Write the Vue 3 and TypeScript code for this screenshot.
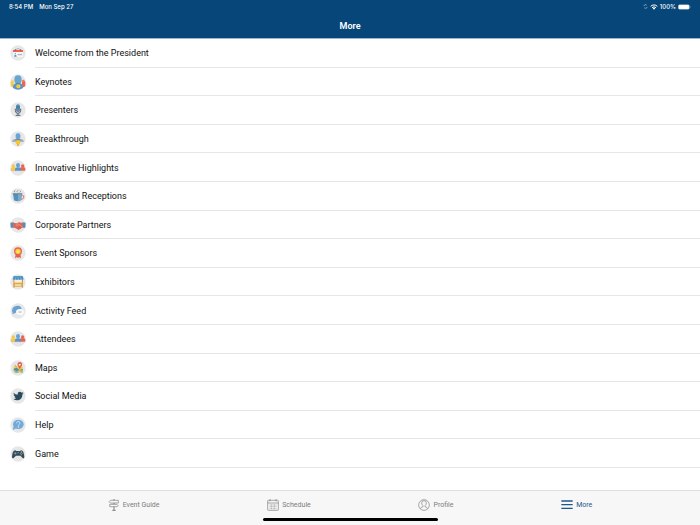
<script setup lang="ts">
import { ref } from 'vue'

type IconName =
  | 'calendar' | 'keynote' | 'mic' | 'idea' | 'people' | 'cup' | 'handshake'
  | 'ribbon' | 'booth' | 'chat' | 'map' | 'bird' | 'help' | 'gamepad'

interface MenuItem {
  label: string
  icon: IconName
}

const items: MenuItem[] = [
  { label: 'Welcome from the President', icon: 'calendar' },
  { label: 'Keynotes', icon: 'keynote' },
  { label: 'Presenters', icon: 'mic' },
  { label: 'Breakthrough', icon: 'idea' },
  { label: 'Innovative Highlights', icon: 'people' },
  { label: 'Breaks and Receptions', icon: 'cup' },
  { label: 'Corporate Partners', icon: 'handshake' },
  { label: 'Event Sponsors', icon: 'ribbon' },
  { label: 'Exhibitors', icon: 'booth' },
  { label: 'Activity Feed', icon: 'chat' },
  { label: 'Attendees', icon: 'people' },
  { label: 'Maps', icon: 'map' },
  { label: 'Social Media', icon: 'bird' },
  { label: 'Help', icon: 'help' },
  { label: 'Game', icon: 'gamepad' },
]

const tabs = ['Event Guide', 'Schedule', 'Profile', 'More'] as const
const activeTab = ref<string>('More')
</script>

<template>
  <div class="screen">
    <header class="header">
      <div class="status">
        <div class="status-group">
          <span>8:54 PM</span>
          <span>Mon Sep 27</span>
        </div>
        <div class="status-right">
          <svg class="moon" viewBox="0 0 12 12" aria-hidden="true">
            <path d="M2 5a4 4 0 0 1 7-2M10 7a4 4 0 0 1-7 2" fill="none" stroke="#8fb0cc" stroke-width="2" />
          </svg>
          <svg class="wifi" viewBox="0 0 24 18" aria-hidden="true">
            <g fill="none" stroke="#fff" stroke-width="3">
              <path d="M2 7a14 14 0 0 1 20 0" />
              <path d="M6 11a9 9 0 0 1 12 0" />
            </g>
            <path d="M8 13a6 6 0 0 1 8 0l-4 4z" fill="#fff" />
          </svg>
          <span>100%</span>
          <svg class="battery" viewBox="0 0 39 18" aria-hidden="true">
            <rect x="1" y="2" width="33" height="14" rx="4" fill="#fff" stroke="#9db8ce" stroke-width="1" />
            <path d="M36 6q3 3 0 6z" fill="#9db8ce" />
          </svg>
        </div>
      </div>
      <h1 class="title">More</h1>
    </header>

    <main class="content">
      <ul class="menu">
        <li v-for="item in items" :key="item.label" class="menu-item">
          <a class="menu-link" href="#">
            <svg class="menu-icon" viewBox="0 0 48 48" aria-hidden="true">
              <circle cx="24" cy="24" r="23" fill="#e7e7e7" />

              <g v-if="item.icon === 'calendar'">
                <path d="M15 15q9-9 18 0" fill="none" stroke="#8a9aa5" stroke-width="2" />
                <rect x="10" y="18" width="28" height="18" fill="#f7f7f7" />
                <rect x="9" y="15" width="30" height="6" fill="#f0624f" />
                <path d="M16 12v5M32 12v5" stroke="#4c5b68" stroke-width="2" />
                <circle cx="16" cy="26" r="2" fill="#5b9dcc" />
                <path d="M12 35q0-6 4-6t4 6z" fill="#5b9dcc" />
                <path d="M23 29h13" stroke="#6d7f8e" stroke-width="2" />
              </g>

              <g v-else-if="item.icon === 'keynote'">
                <path d="M2 37V25q0-4 4-4t5 4v16z" fill="#f4c94d" />
                <path d="M46 37V25q0-4-4-4t-6 4v16z" fill="#ea6550" />
                <circle cx="8" cy="21" r="4" fill="#f6d46c" />
                <circle cx="40" cy="21" r="4" fill="#ed7561" />
                <path d="M9 42q-1-12 9-14h12q10 2 9 14-15 10-30 0z" fill="#5c96c4" />
                <ellipse cx="24" cy="17" rx="11" ry="13" fill="#6aa5d0" />
                <path d="M18 27h12l-6 8z" fill="#4886b7" />
                <circle cx="25" cy="37" r="6" fill="#f5d33e" />
                <circle cx="25" cy="37" r="2" fill="#e6a93a" />
              </g>

              <g v-else-if="item.icon === 'mic'">
                <path d="M16 20v6q0 8 8 8t8-8v-6M24 34v6M17 40h14" fill="none" stroke="#4e626f" stroke-width="3" />
                <rect x="18" y="7" width="12" height="24" rx="6" fill="#5292bf" />
                <path d="M19 14h10M19 18h10" stroke="#3f6b8c" stroke-width="2" />
                <path d="M21 24h6v4h-6z" fill="#dc6554" />
              </g>

              <g v-else-if="item.icon === 'idea'">
                <path d="M6 32q1-7 12-9h12q11 2 12 9z" fill="#9ca8b1" />
                <rect x="17" y="7" width="14" height="18" rx="6" fill="#69a5d7" />
                <path d="M15 26l9 7 8-7-8-3z" fill="#5f8fb6" />
                <circle cx="24" cy="34" r="7" fill="#f8c72f" />
                <path d="M21 40h6v4h-6z" fill="#e4a83e" />
              </g>

              <g v-else-if="item.icon === 'people'">
                <circle cx="10" cy="18" r="5" fill="#f5c74d" />
                <path d="M2 32v-5q0-6 8-6t9 6v5z" fill="#f5c74d" />
                <circle cx="38" cy="18" r="5" fill="#ea6550" />
                <path d="M29 32v-5q0-6 9-6t8 6v5z" fill="#ea6550" />
                <ellipse cx="24" cy="16" rx="6" ry="7" fill="#63a3da" />
                <path d="M15 32v-4q0-6 9-6t9 6v4z" fill="#5795ca" />
                <path d="M3 32h42" stroke="#a9a8a4" stroke-width="1" />
              </g>

              <g v-else-if="item.icon === 'cup'">
                <path d="M34 22h3q6 0 4 7-2 6-9 5" fill="none" stroke="#e2705e" stroke-width="3" />
                <path d="M9 18h27l-3 19q-10 6-21 0z" fill="#5690bd" />
                <path d="M24 18h12l-3 19q-4 3-9 3z" fill="#78a9cf" />
                <path d="M8 17h29" stroke="#385a73" stroke-width="2" />
                <path d="M14 13q-3-4 2-6M23 13q-4-3 1-6M29 13q5-2 1-5" fill="none" stroke="#577486" stroke-width="2" />
              </g>

              <g v-else-if="item.icon === 'handshake'">
                <path d="M1 17l10-1 3 16H2z" fill="#4f8fb9" />
                <path d="M47 17l-10-1-3 16h12z" fill="#4f8fb9" />
                <path d="M9 17l10 2 8-3 12 2v12l-9 7q-5 3-9-1L9 30z" fill="#df6757" />
                <path d="M23 18l-4 7q5 2 8-3l11 9" fill="none" stroke="#f08f7a" stroke-width="3" />
                <path d="M22 33l5 4M27 29l6 5" stroke="#b94b43" stroke-width="2" />
              </g>

              <g v-else-if="item.icon === 'ribbon'">
                <path d="M17 26l-2 14 6-4 3 4 3-4 6 4-2-14z" fill="#e5604d" />
                <circle cx="24" cy="19" r="12" fill="#e7654e" />
                <circle cx="24" cy="19" r="8" fill="#f8cc35" />
                <path d="M24 13l2 4 4 1-3 3 1 4-4-2-4 2 1-4-3-3 4-1z" fill="#ffe270" />
              </g>

              <g v-else-if="item.icon === 'booth'">
                <path d="M12 17v24M37 17v24" stroke="#bd8a46" stroke-width="3" />
                <rect x="14" y="17" width="21" height="12" fill="#f6efda" />
                <rect x="11" y="26" width="27" height="12" fill="#e3a63c" />
                <path d="M15 33h19" stroke="#f6e1ac" stroke-width="5" />
                <path d="M11 6h27l3 10q-4 4-8 0-4 4-8 0-4 4-8 0-4 4-9 0z" fill="#4f94c5" />
                <path d="M18 7l-2 9M31 7l2 9M24 7v9" stroke="#9fc8e1" stroke-width="1" />
              </g>

              <g v-else-if="item.icon === 'chat'">
                <path d="M7 28q-4-18 14-20 12-1 14 10L21 30z" fill="#67a2d3" />
                <path d="M9 23l-2 11 10-5z" fill="#67a2d3" />
                <ellipse cx="30" cy="27" rx="12" ry="9" fill="#fafafa" />
                <path d="M36 32l4 7-10-4z" fill="#fafafa" />
                <path d="M25 27h10" stroke="#8796a3" stroke-width="2" />
              </g>

              <g v-else-if="item.icon === 'map'">
                <path d="M11 18l9 2 9-2 9 2v18l-9-2-9 2-9-2z" fill="#f3c940" />
                <path d="M11 26l9-3 9 7 9-4v6l-9-1-9 2-9-2z" fill="#438fc0" />
                <path d="M11 36l9-2 9 2 9-2v4l-9-2-9 2-9-2z" fill="#68a778" />
                <path d="M29 28l-6-12q-2-9 6-10 9 1 7 10z" fill="#e95d4d" />
                <circle cx="29" cy="14" r="3" fill="#fff" />
                <path d="M14 15l6 5" stroke="#5d7d86" stroke-width="2" />
              </g>

              <g v-else-if="item.icon === 'bird'">
                <path d="M11 14q5 6 12 6-1-8 6-9 4 0 6 3l5-2-3 5 4-1-4 4q0 12-10 16-9 3-17-3 6 0 9-3-5 0-6-4h3q-6-3-5-7l3 1q-5-4-3-6z" fill="#294b60" />
              </g>

              <g v-else-if="item.icon === 'help'">
                <path d="M11 28l-3 11 11-5z" fill="#71aadb" />
                <ellipse cx="25" cy="22" rx="16" ry="14" fill="#71aadb" />
                <path d="M20 19q0-6 5-6t5 5q0 3-3 4-2 1-2 4" fill="none" stroke="#e9f4fb" stroke-width="2" />
                <circle cx="25" cy="30" r="2" fill="#e9f4fb" />
              </g>

              <g v-else>
                <path d="M12 14q4-3 7 1h11q3-4 7-1 5 3 6 20-1 5-5 2l-7-7H18l-7 7q-5 3-5-3 1-16 6-19z" fill="#344c59" />
                <path d="M12 22h8M16 18v8" stroke="#94abb9" stroke-width="2" />
                <circle cx="34" cy="18" r="2" fill="#f1c74d" />
                <circle cx="37" cy="22" r="2" fill="#e96550" />
                <circle cx="31" cy="22" r="2" fill="#63a7d5" />
                <circle cx="34" cy="26" r="2" fill="#77b06b" />
                <path d="M22 20h5" stroke="#4e8fc1" stroke-width="3" />
              </g>
            </svg>
            <span class="menu-label">{{ item.label }}</span>
          </a>
        </li>
      </ul>
    </main>

    <footer class="footer">
      <nav class="tabs" aria-label="Main">
        <button
          v-for="tab in tabs"
          :key="tab"
          type="button"
          class="tab"
          :class="{ active: activeTab === tab }"
          @click="activeTab = tab"
        >
          <svg class="tab-icon" viewBox="0 0 36 36" fill="none" stroke="currentColor" stroke-width="2" aria-hidden="true">
            <g v-if="tab === 'Event Guide'">
              <path d="M18 0v4M18 12v4M18 23v11" stroke-width="3" />
              <path d="M13 34h10" stroke-width="3" />
              <path d="M7 4h24v8H7l-4-4zM5 16h22l4 4-4 3H5z" />
            </g>
            <g v-else-if="tab === 'Schedule'">
              <rect x="2" y="4" width="32" height="30" rx="2" />
              <path d="M2 12h32M9 0v7M27 0v7" />
              <path d="M7 18h22M7 23h22M7 29h22M13 16v15M22 16v15" stroke-width="1" />
            </g>
            <g v-else-if="tab === 'Profile'">
              <circle cx="18" cy="18" r="16" />
              <path d="M7 29q1-4 8-6v-3q-4-3-4-8 0-7 7-7t7 7q0 5-4 8v3q7 2 8 6" />
            </g>
            <g v-else stroke-width="4">
              <path d="M1 6h34M1 17h34M1 28h34" />
            </g>
          </svg>
          <span>{{ tab }}</span>
        </button>
      </nav>
      <div class="home-indicator"></div>
    </footer>
  </div>
</template>

<style>
body {
  margin: 0;
  background: #fff;
}
</style>

<style scoped>
.screen {
  display: flex;
  flex-direction: column;
  min-height: 100vh;
  font-family: Roboto, 'Liberation Sans', sans-serif;
  color: #111;
}

.header {
  background: #074678;
  border-bottom: 1px solid #9fb5ca;
  color: #fff;
}

.status {
  display: flex;
  justify-content: space-between;
  align-items: center;
  padding: 0 9px;
  height: 13px;
  font-family: Inter, 'Liberation Sans', sans-serif;
  font-size: 6px;
  font-weight: 500;
}

.status-group {
  display: flex;
  gap: 6px;
}

.status-right {
  display: flex;
  align-items: center;
  gap: 2px;
}

.moon {
  width: 5px;
  height: 5px;
}

.wifi {
  width: 8px;
  height: 6px;
}

.battery {
  width: 13px;
  height: 6px;
}

.title {
  margin: 0;
  padding-top: 1px;
  font-size: 9px;
  font-weight: 600;
  line-height: 24px;
  text-align: center;
}

.content {
  display: flex;
  flex: 1;
  flex-direction: column;
  padding-bottom: 22px;
}

.menu {
  display: grid;
  flex: 1;
  grid-auto-rows: 1fr;
  margin: 0;
  padding: 0;
  list-style: none;
}

.menu-item {
  display: flex;
}

.menu-link {
  display: flex;
  flex: 1;
  align-items: stretch;
  gap: 9px;
  padding-left: 10px;
  color: inherit;
  text-decoration: none;
}

.menu-icon {
  align-self: center;
  width: 16px;
  height: 16px;
}

.menu-label {
  display: flex;
  flex: 1;
  align-items: center;
  padding-top: 1px;
  border-bottom: 1px solid #e6e6e7;
  font-size: 9px;
}

.footer {
  display: flex;
  flex-direction: column;
  align-items: center;
  padding-bottom: 4px;
  border-top: 1px solid #dedede;
  background: #f7f7f7;
}

.tabs {
  display: flex;
  align-self: stretch;
  justify-content: space-evenly;
  height: 27px;
}

.tab {
  display: flex;
  align-items: center;
  gap: 3px;
  padding: 0;
  border: 0;
  background: none;
  color: #7d7d7d;
  font: inherit;
  font-size: 7px;
  cursor: pointer;
}

.tab.active {
  color: #1b588a;
}

.tab-icon {
  width: 12px;
  height: 12px;
}

.home-indicator {
  width: 25%;
  height: 3px;
  border-radius: 2px;
  background: #000;
}
</style>
